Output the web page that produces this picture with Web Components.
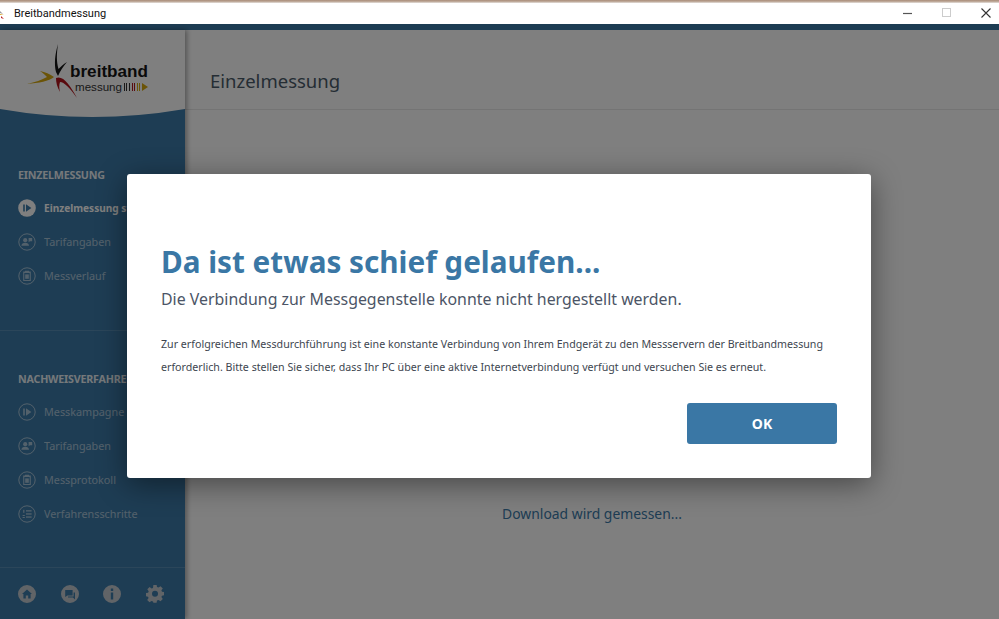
<!DOCTYPE html>
<html lang="de"><head><meta charset="utf-8"><title>Breitbandmessung</title>
<style>
html,body{margin:0;height:619px;overflow:hidden;background:#fff}
body{font-family:"Noto Sans","Liberation Sans",sans-serif;display:flex;flex-direction:column}
</style></head><body>
<app-titlebar>Breitbandmessung</app-titlebar>
<app-window>
  <side-nav slot="nav">
    <nav-section title="EINZELMESSUNG">
      <nav-item icon="play" active>Einzelmessung starten</nav-item>
      <nav-item icon="person">Tarifangaben</nav-item>
      <nav-item icon="doc">Messverlauf</nav-item>
    </nav-section>
    <nav-section title="NACHWEISVERFAHREN">
      <nav-item icon="play">Messkampagne starten</nav-item>
      <nav-item icon="person">Tarifangaben</nav-item>
      <nav-item icon="doc">Messprotokoll</nav-item>
      <nav-item icon="list">Verfahrensschritte</nav-item>
    </nav-section>
  </side-nav>
  <main-view slot="main" heading="Einzelmessung">Download wird gemessen...</main-view>
  <error-dialog slot="overlay" heading="Da ist etwas schief gelaufen..." sub="Die Verbindung zur Messgegenstelle konnte nicht hergestellt werden." action="OK">Zur erfolgreichen Messdurchführung ist eine konstante Verbindung von Ihrem Endgerät zu den Messservern der Breitbandmessung<br>erforderlich. Bitte stellen Sie sicher, dass Ihr PC über eine aktive Internetverbindung verfügt und versuchen Sie es erneut.</error-dialog>
</app-window>
<script>
const ICONS={
 play:`<rect x="5.2" y="5.5" width="1.6" height="7"/><path d="M8 5.2 13.4 9 8 12.8z"/>`,
 person:`<circle cx="7.2" cy="7.2" r="2.1"/><path d="M3.4 12.8c0-2 1.7-3 3.8-3s3.8 1 3.8 3z"/><path d="M10.6 5h3.6v3.2h-2.2l-1.4 1.1z"/>`,
 doc:`<path fill-rule="evenodd" d="M5.2 4.6H7V3.8h4v.8h1.800v9.400H5.200zM6.300 6v6.900h5.400V6z"/><rect x="7.200" y="7.400" width="3.600" height="4.400"/>`,
 list:`<rect x="8" y="5.2" width="5.6" height="1.3"/><rect x="8" y="8.3" width="5.6" height="1.3"/><rect x="8" y="11.4" width="5.6" height="1.3"/><rect x="5.2" y="4.8" width="1.2" height="3"/><rect x="4.6" y="10" width="2.2" height="1"/><rect x="4.6" y="12" width="2.2" height="1"/>`
};
function def(name,html){
  customElements.define(name,class extends HTMLElement{
    connectedCallback(){
      if(this.shadowRoot)return;
      const r=this.attachShadow({mode:"open"});
      r.innerHTML=typeof html==="function"?html(this):html;
    }
  });
}
def("app-titlebar",`<style>
:host{display:block;flex:none;height:24px;background:#fff;color:#111;font:11px Roboto,sans-serif}
.stripe{height:3px;background:linear-gradient(#a98c78,#c6b4a6 70%,#eee)}
.row{height:21px;display:flex;align-items:center}
.ico{width:6px;height:12px;flex:none;margin-right:8px;overflow:hidden}
.title{flex:1}
.ctl{width:20px;height:20px;margin-right:19px;display:block;position:relative;top:-1px}
.ctl:last-child{margin-right:3px}
</style><div class="stripe"></div><div class="row">
<svg class="ico" viewBox="0 0 6 12"><path d="M0 3 3 6 0 5z" fill="#999"/><path d="M0 7h4L0 6z" fill="#d9a520"/><path d="M1 8l3 3-3-1z" fill="#b22"/></svg>
<span class="title"><slot></slot></span>
<svg class="ctl" viewBox="0 0 20 20"><path d="M5 10.500h9" stroke="#555" stroke-width="1.2"/></svg>
<svg class="ctl" viewBox="0 0 20 20"><rect x="5.500" y="5.500" width="8" height="8" fill="none" stroke="#ccc"/></svg>
<svg class="ctl" viewBox="0 0 20 20"><path d="M5.500 5.500l9 9M14.500 5.500l-9 9" stroke="#333" stroke-width="1.1"/></svg>
</div>`);
def("app-window",`<style>
:host{display:flex;flex-direction:column;flex:1;min-height:0;position:relative}
.bar{height:6px;background:#3b79a6;flex:none}
.body{flex:1;display:flex;min-height:0}
.ov{position:absolute;inset:0;z-index:5;background:rgba(0,0,0,.5);display:flex;justify-content:center;align-items:flex-start;padding:150px 1px 0 0;box-sizing:border-box}
</style><div class="bar"></div><div class="body"><slot name="nav"></slot><slot name="main"></slot></div><div class="ov"><slot name="overlay"></slot></div>`);
def("side-nav",`<style>
:host{display:flex;flex-direction:column;width:185px;flex:none;background:#3c7aa8;box-shadow:2px 0 5px rgba(0,0,0,.35);position:relative;z-index:1}
.logo{height:87px;flex:none;display:block}
text{font-family:"Liberation Sans",sans-serif}
.foot{margin-top:36px;border-top:1px solid rgba(255,255,255,.14);display:flex;padding:17px 0 0 18px;gap:24.500px}
.foot svg{width:18px;height:18px;display:block;fill:#c2c9cf;}
</style>
<svg class="logo" viewBox="0 0 185 87" width="185" height="87">
<path d="M0 0H185V79Q92 95 0 79Z" fill="#fff"/>
<path d="M58 14C55 24 54 34 56 42L58 46C60 41 63 37 67 32 63 34 61 37 58.500 39 56.500 32 56.500 24 58 14Z" fill="#141414"/>
<path d="M27 54C35 52 42 50 47 47 45 45 43 43 40 41 45 42 50 44 54 47 49 51 39 53 27 54Z" fill="#d6a80f"/>
<path d="M56 48C63 45 70 55 77 68 70 58 64 52 60 52 59 55 59 58 60 62 57 57 56 52 56 48Z" fill="#b3151d"/>
<text x="70" y="46.500" font-size="17" font-weight="700" fill="#151515" textLength="78" lengthAdjust="spacingAndGlyphs">breitband</text>
<text x="75" y="60.500" font-size="11" fill="#333" textLength="47" lengthAdjust="spacingAndGlyphs">messung</text>
<path d="M124.500 53v8M126.500 53v8M129.500 53v8" stroke="#333"/><path d="M132.500 53v8M134.500 53v8" stroke="#b3151d"/><path d="M137.500 53v8M139.500 53v8" stroke="#d6a80f"/><path d="M142 53l6 4-6 4z" fill="#d6a80f"/>
</svg>
<slot></slot>
<div class="foot">
<svg viewBox="0 0 18 18"><path fill-rule="evenodd" d="M9 0a9 9 0 1 0 0 18A9 9 0 0 0 9 0zM9 4.600l5 4.400h-1.400v4.400h-2.400v-3H7.800v3H5.400V9H4z"/></svg>
<svg viewBox="0 0 18 18"><path fill-rule="evenodd" d="M9 0a9 9 0 1 0 0 18A9 9 0 0 0 9 0zM4.200 5h7.400v5.400H6.400L4.200 12zM12.600 7.400h1.400v7l-2-1.800H7v-1.200h5.600z"/></svg>
<svg viewBox="0 0 18 18"><path fill-rule="evenodd" d="M9 0a9 9 0 1 0 0 18A9 9 0 0 0 9 0zM7.800 3.600h2.400V6H7.800zM7.800 7.400h2.400v7H7.800z"/></svg>
<svg viewBox="0 0 18 18"><path fill-rule="evenodd" d="M7.400.2h3.200l.4 2.300 1.500.6 2-1.400 2.300 2.300-1.400 2 .6 1.500 2.300.4v3.200l-2.300.4-.6 1.500 1.400 2-2.300 2.300-2-1.400-1.500.6-.4 2.300H7.400L7 17.500l-1.500-.6-2 1.400-2.300-2.300 1.400-2-.6-1.500L-.2 12.100V8.900l2.300-.4.6-1.500-1.400-2 2.300-2.300 2 1.400L7 3.500zM9 6.500a3 3 0 1 0 0 6 3 3 0 0 0 0-6z" transform="translate(0 -.5) scale(1 .97)"/></svg>
</div>`);
def("nav-section",h=>`<style>
:host{display:block;padding:50px 0 0;font-family:"Noto Sans",sans-serif}
:host(:not(:first-of-type)){margin-top:37px;border-top:1px solid rgba(255,255,255,.14);padding-top:40px}
.h{font-size:10.700px;line-height:16px;font-weight:700;color:#fff;opacity:.9;padding-left:18px;margin-bottom:8px;white-space:nowrap;letter-spacing:-.2px}
</style><div class="h">${h.getAttribute("title")}</div><slot></slot>`);
def("nav-item",h=>{
 const a=h.hasAttribute("active"),k=h.getAttribute("icon");
 return `<style>
:host{display:flex;align-items:center;height:34px;padding-left:18px;gap:8px;color:#fff;font:${a?700:400} ${a?10.1:10.8}px/34px "Noto Sans",sans-serif;white-space:nowrap}
svg{width:18px;height:18px;flex:none;opacity:${a?1:.55}}
span{opacity:${a?1:.55};display:block;height:34px}
</style><svg viewBox="0 0 18 18">${a?`<circle cx="9" cy="9" r="8.800" fill="#fff"/><g fill="#3c7aa8">${ICONS[k]}</g>`:`<circle cx="9" cy="9" r="8.200" fill="none" stroke="#fff"/><g fill="#fff">${ICONS[k]}</g>`}</svg><span><slot></slot></span>`;
});
def("main-view",h=>`<style>
:host{display:flex;flex-direction:column;flex:1;min-width:0;background:#fff;font-family:"Noto Sans",sans-serif}
header{height:80px;box-sizing:border-box;border-bottom:1px solid #e8e8e8;padding:36px 0 0 25px;font-size:18.500px;line-height:30px;color:#4a5a68;flex:none}
.s{padding-top:393px;text-align:center;font-size:13.900px;line-height:22px;color:#3c7aa8}
</style><header>${h.getAttribute("heading")}</header><div class="s"><slot></slot></div>`);
def("error-dialog",h=>`<style>
:host{display:flex;flex-direction:column;width:744px;height:304px;box-sizing:border-box;padding:65px 34px 0;background:#fff;border-radius:3px;box-shadow:0 6px 30px rgba(0,0,0,.45);font-family:"Noto Sans",sans-serif}
h1{margin:0;font-size:29.700px;line-height:46px;font-weight:700;color:#3a77a5;white-space:nowrap}
p.s{margin:2px 0 0;font-size:15.900px;line-height:24px;color:#4c5566;white-space:nowrap}
p.b{margin:22px 0 0;font-size:10.660px;line-height:23px;color:#3e4650;white-space:nowrap}
.a{display:flex;justify-content:flex-end;margin-top:24px}
button{width:150px;height:41px;border:0;border-radius:3px;background:#3a77a5;color:#fff;font:700 14px "Noto Sans",sans-serif;padding:0}
</style><h1>${h.getAttribute("heading")}</h1><p class="s">${h.getAttribute("sub")}</p><p class="b"><slot></slot></p><div class="a"><button>${h.getAttribute("action")}</button></div>`);
</script>
</body></html>
